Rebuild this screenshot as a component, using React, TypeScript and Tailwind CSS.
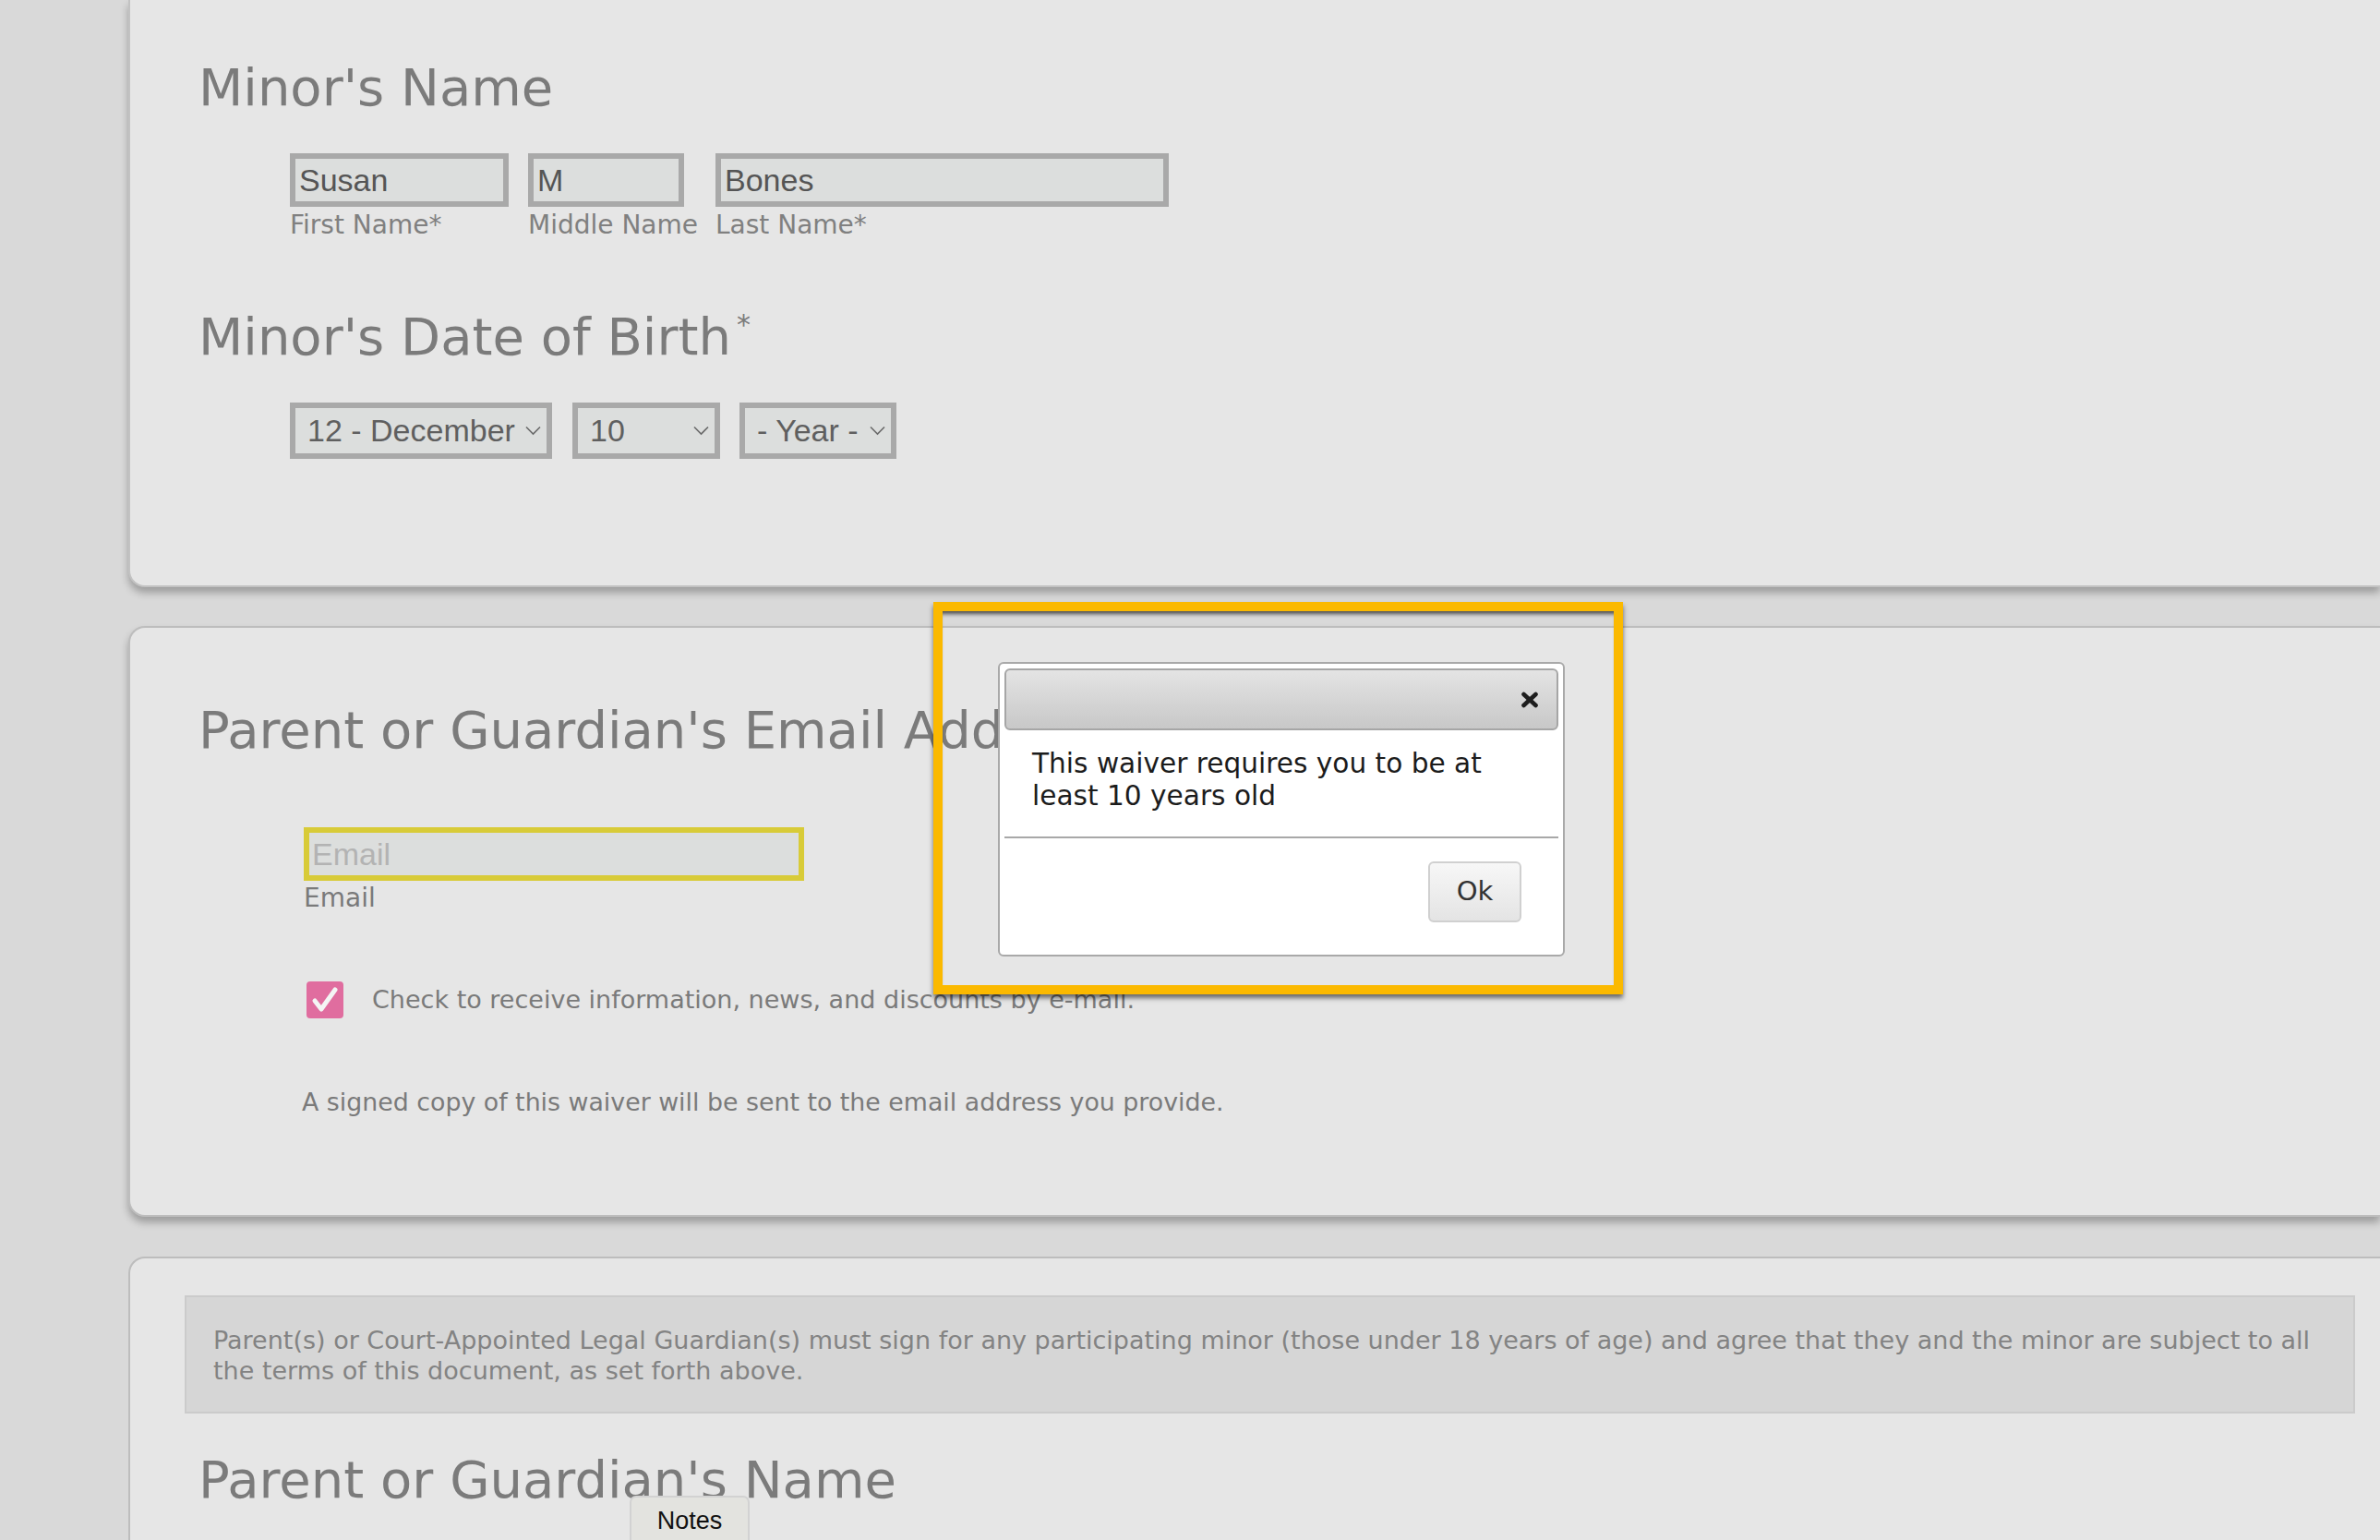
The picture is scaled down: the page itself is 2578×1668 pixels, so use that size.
import React from "react";

const sans = "font-['DejaVu_Sans',Verdana,sans-serif]";
const arial = "font-['Liberation_Sans',Arial,sans-serif]";

function Heading({ children }: { children: React.ReactNode }) {
  return <h2 className={`${sans} ml-[5px] text-[56px] leading-[64px] text-[#7b7b7b]`}>{children}</h2>;
}

function Chevron() {
  return (
    <svg width="17" height="11" viewBox="0 0 17 11" className="shrink-0">
      <polyline points="1,1.5 8.5,9 16,1.5" fill="none" stroke="#6a6a6a" strokeWidth="1.6" />
    </svg>
  );
}

function FakeSelect({ value, width, gap }: { value: string; width: string; gap: string }) {
  return (
    <div
      className={`${width} ${gap} ${arial} flex h-[61px] items-center justify-between border-[6px] border-[#a9a9a9] bg-[#dcdedd] pl-[13px] pr-[6px] text-[34px] text-[#5f5f5f]`}
    >
      <span className="whitespace-nowrap">{value}</span>
      <Chevron />
    </div>
  );
}

function NameField({ value, label, width, gap }: { value: string; label: string; width: string; gap: string }) {
  return (
    <div className={`${width} ${gap} shrink-0`}>
      <div
        className={`${arial} flex h-[58px] w-full items-center border-[6px] border-[#a9a9a9] bg-[#dcdedd] px-[4px] text-[34px] text-[#555]`}
      >
        {value}
      </div>
      <div className={`${sans} mt-[4px] whitespace-nowrap text-[28px] leading-[32px] text-[#808080]`}>{label}</div>
    </div>
  );
}

export default function App() {
  return (
    <div className="relative h-[1668px] overflow-hidden bg-[#d9d9d9] pl-[139px]">
      {/* minor section */}
      <section className="rounded-bl-[18px] border-b-2 border-l-2 border-[#c2c2c2] bg-[#e6e6e6] pb-[137px] pl-[69px] pt-[63px] shadow-[0_6px_8px_rgba(0,0,0,0.28)]">
        <Heading>Minor's Name</Heading>
        <div className="ml-[104px] mt-[39px] flex">
          <NameField value="Susan" label="First Name*" width="w-[237px]" gap="mr-[21px]" />
          <NameField value="M" label="Middle Name" width="w-[169px]" gap="mr-[34px]" />
          <NameField value="Bones" label="Last Name*" width="w-[491px]" gap="" />
        </div>

        <div className="mt-[73px]">
          <Heading>
            Minor's Date of Birth
            <sup className="relative -top-[22px] ml-[6px] text-[30px]">*</sup>
          </Heading>
        </div>
        <div className="ml-[104px] mt-[39px] flex">
          <FakeSelect value="12 - December" width="w-[284px]" gap="mr-[22px]" />
          <FakeSelect value="10" width="w-[160px]" gap="mr-[21px]" />
          <FakeSelect value="- Year -" width="w-[170px]" gap="" />
        </div>
      </section>

      {/* email section */}
      <section className="mt-[42px] rounded-l-[18px] border-y-2 border-l-2 border-[#bdbdbd] bg-[#e6e6e6] pb-[106px] pl-[69px] pt-[79px] shadow-[0_6px_8px_rgba(0,0,0,0.28)]">
        <Heading>Parent or Guardian's Email Address</Heading>
        <div className="ml-[119px] mt-[73px]">
          <div
            className={`${arial} flex h-[58px] w-[542px] items-center border-[6px] border-[#d8cb38] bg-[#dcdedd] px-[3px] text-[34px] text-[#b3b3b3]`}
          >
            Email
          </div>
          <div className={`${sans} mt-[3px] text-[28px] leading-[32px] text-[#7a7a7a]`}>Email</div>

          <div className="ml-[3px] mt-[74px] flex items-center gap-[31px]">
            <div className="flex h-[40px] w-[40px] items-center justify-center rounded-[4px] bg-[#e06d9f]">
              <svg width="40" height="40" viewBox="0 0 40 40">
                <polyline
                  points="9,21 16,30 31,9"
                  fill="none"
                  stroke="#f4f4f4"
                  strokeWidth="5"
                  strokeLinecap="round"
                  strokeLinejoin="round"
                />
              </svg>
            </div>
            <span className={`${sans} text-[27px] leading-[32px] text-[#7a7a7a]`}>
              Check to receive information, news, and discounts by e-mail.
            </span>
          </div>

          <p className={`${sans} -ml-[2px] mt-[75px] text-[26.8px] leading-[32px] text-[#7a7a7a]`}>
            A signed copy of this waiver will be sent to the email address you provide.
          </p>
        </div>
      </section>

      {/* guardian section */}
      <section className="mt-[43px] h-[400px] rounded-tl-[18px] border-l-2 border-t-2 border-[#bdbdbd] bg-[#e6e6e6] pl-[69px] pt-[40px]">
        <div className="-ml-[10px] mr-[27px] border-2 border-[#cbcbcb] bg-[#d6d6d6] pb-[28px] pl-[29px] pr-[30px] pt-[30px]">
          <p className={`${sans} text-[27px] leading-[33px] text-[#838383]`}>
            Parent(s) or Court-Appointed Legal Guardian(s) must sign for any participating minor (those under 18 years of
            age) and agree that they and the minor are subject to all the terms of this document, as set forth above.
          </p>
        </div>
        <div className="mt-[40px]">
          <Heading>Parent or Guardian's Name</Heading>
        </div>
      </section>

      {/* notes tab */}
      <div
        className={`${arial} absolute left-[682px] top-[1620px] h-[60px] w-[130px] rounded-t-[7px] border-2 border-[#d2d2d2] bg-[#e3e3df] pt-[9px] text-center text-[27px] leading-[32px] text-[#111]`}
      >
        Notes
      </div>

      {/* highlight frame */}
      <div className="absolute left-[1011px] top-[652px] h-[425px] w-[747px] border-[10px] border-[#fbb900] shadow-[0_4px_5px_rgba(0,0,0,0.55),inset_0_6px_4px_-3px_rgba(0,0,0,0.65)]" />

      {/* dialog */}
      <div className="absolute left-[1081px] top-[717px] flex h-[319px] w-[614px] flex-col rounded-[6px] border-2 border-[#a9a9a9] bg-white p-[5px]">
        <div className="flex h-[67px] shrink-0 items-center justify-end rounded-[6px] border-2 border-[#a6a6a6] bg-linear-to-b from-[#e4e4e4] to-[#c8c8c8] pr-[19px]">
          <svg width="20" height="18" viewBox="0 0 20 18">
            <path d="M3.5 3 L16.5 15 M16.5 3 L3.5 15" stroke="#1e1e1e" strokeWidth="4.6" strokeLinecap="round" />
          </svg>
        </div>
        <p className={`${sans} pl-[30px] pr-[30px] pt-[19px] text-[29.6px] leading-[35px] text-[#1c1c1c]`}>
          This waiver requires you to be at least 10 years old
        </p>
        <div className="mt-[26px] h-[2px] shrink-0 bg-[#a8a8a8]" />
        <div className="flex justify-end pr-[40px] pt-[25px]">
          <button
            type="button"
            className={`${sans} h-[66px] w-[101px] rounded-[6px] border-2 border-[#d0d0d0] bg-linear-to-b from-[#f7f7f7] to-[#e4e4e4] text-[29px] text-[#333]`}
          >
            Ok
          </button>
        </div>
      </div>
    </div>
  );
}
